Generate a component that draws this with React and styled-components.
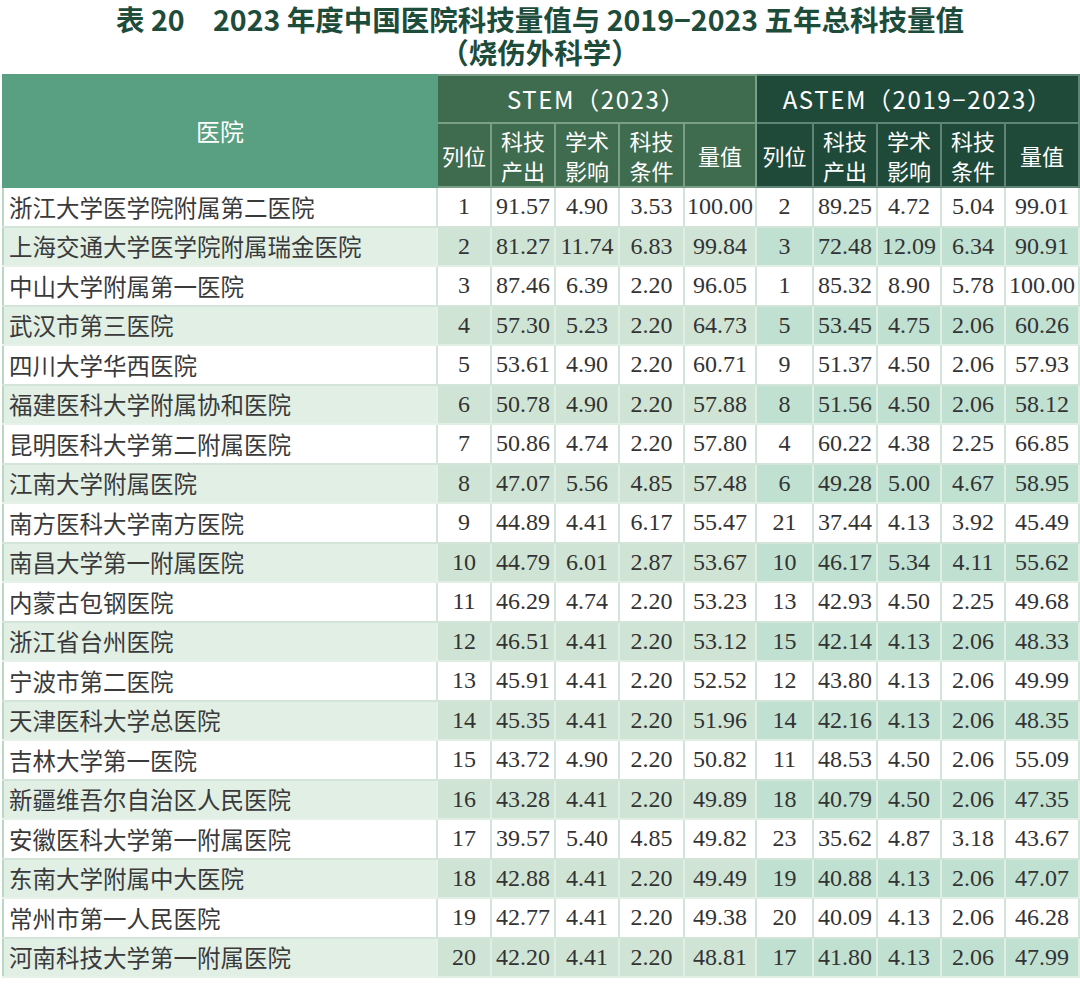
import React from "react";
import styled, { createGlobalStyle } from "styled-components";

const GlobalStyle = createGlobalStyle`
  body {
    margin: 0;
    background: #ffffff;
    font-family: "Noto Sans CJK SC", "Noto Sans", sans-serif;
  }
`;

const Page = styled.div`
  width: 1080px;
  padding: 0 2px;
  box-sizing: border-box;
`;

const Title = styled.header`
  display: flex;
  flex-direction: column;
  align-items: center;
  height: 74px;
  padding-top: 3px;
  box-sizing: border-box;
  font-family: "Noto Sans CJK SC", sans-serif;
  font-weight: 700;
  font-size: 28.5px;
  color: #1e4c3b;
`;

const TitleLine = styled.div`
  line-height: ${(p) => p.$lh};
  white-space: nowrap;
`;

const Table = styled.table`
  width: 1076px;
  table-layout: fixed;
  border-collapse: collapse;
`;

const HeadCell = styled.th`
  padding: 0;
  color: #ffffff;
  font-family: "Noto Sans CJK SC", "Noto Sans", sans-serif;
  font-weight: 400;
  font-size: ${(p) => (p.$big ? "24px" : "22px")};
  letter-spacing: ${(p) => (p.$spaced ? "1.6px" : "0")};
  line-height: 30px;
  text-align: center;
  vertical-align: middle;
  background: ${(p) => p.$bg};
  border: 2px solid ${(p) => p.$line};
  height: ${(p) => p.$h || "auto"};
`;

const Row = styled.tr`
  height: 39.5px;
`;

const NameCell = styled.td`
  padding: 0 0 0 5px;
  font-family: "Noto Sans CJK SC", sans-serif;
  font-size: 23.5px;
  color: #3a3a3a;
  white-space: nowrap;
  background: ${(p) => (p.$alt ? "#e1efe5" : "#ffffff")};
  border: 2px solid ${(p) => (p.$alt ? "#e6f1e9" : "#d3e5d9")};
  border-left-color: #b9d8c4;
`;

const NumCell = styled.td`
  padding: 0;
  text-align: center;
  font-family: "Liberation Serif", "Times New Roman", serif;
  font-size: 24px;
  color: #333333;
  white-space: nowrap;
  background: ${(p) => (p.$alt ? (p.$astem ? "#c0e0d2" : "#cfe4d5") : "#ffffff")};
  border: 2px solid ${(p) => (p.$alt ? "#e0eee4" : "#d3e5d9")};
`;

const rows = [
  ["浙江大学医学院附属第二医院", "1", "91.57", "4.90", "3.53", "100.00", "2", "89.25", "4.72", "5.04", "99.01"],
  ["上海交通大学医学院附属瑞金医院", "2", "81.27", "11.74", "6.83", "99.84", "3", "72.48", "12.09", "6.34", "90.91"],
  ["中山大学附属第一医院", "3", "87.46", "6.39", "2.20", "96.05", "1", "85.32", "8.90", "5.78", "100.00"],
  ["武汉市第三医院", "4", "57.30", "5.23", "2.20", "64.73", "5", "53.45", "4.75", "2.06", "60.26"],
  ["四川大学华西医院", "5", "53.61", "4.90", "2.20", "60.71", "9", "51.37", "4.50", "2.06", "57.93"],
  ["福建医科大学附属协和医院", "6", "50.78", "4.90", "2.20", "57.88", "8", "51.56", "4.50", "2.06", "58.12"],
  ["昆明医科大学第二附属医院", "7", "50.86", "4.74", "2.20", "57.80", "4", "60.22", "4.38", "2.25", "66.85"],
  ["江南大学附属医院", "8", "47.07", "5.56", "4.85", "57.48", "6", "49.28", "5.00", "4.67", "58.95"],
  ["南方医科大学南方医院", "9", "44.89", "4.41", "6.17", "55.47", "21", "37.44", "4.13", "3.92", "45.49"],
  ["南昌大学第一附属医院", "10", "44.79", "6.01", "2.87", "53.67", "10", "46.17", "5.34", "4.11", "55.62"],
  ["内蒙古包钢医院", "11", "46.29", "4.74", "2.20", "53.23", "13", "42.93", "4.50", "2.25", "49.68"],
  ["浙江省台州医院", "12", "46.51", "4.41", "2.20", "53.12", "15", "42.14", "4.13", "2.06", "48.33"],
  ["宁波市第二医院", "13", "45.91", "4.41", "2.20", "52.52", "12", "43.80", "4.13", "2.06", "49.99"],
  ["天津医科大学总医院", "14", "45.35", "4.41", "2.20", "51.96", "14", "42.16", "4.13", "2.06", "48.35"],
  ["吉林大学第一医院", "15", "43.72", "4.90", "2.20", "50.82", "11", "48.53", "4.50", "2.06", "55.09"],
  ["新疆维吾尔自治区人民医院", "16", "43.28", "4.41", "2.20", "49.89", "18", "40.79", "4.50", "2.06", "47.35"],
  ["安徽医科大学第一附属医院", "17", "39.57", "5.40", "4.85", "49.82", "23", "35.62", "4.87", "3.18", "43.67"],
  ["东南大学附属中大医院", "18", "42.88", "4.41", "2.20", "49.49", "19", "40.88", "4.13", "2.06", "47.07"],
  ["常州市第一人民医院", "19", "42.77", "4.41", "2.20", "49.38", "20", "40.09", "4.13", "2.06", "46.28"],
  ["河南科技大学第一附属医院", "20", "42.20", "4.41", "2.20", "48.81", "17", "41.80", "4.13", "2.06", "47.99"],
];

const widths = [434, 54, 64, 64, 65, 72, 57, 64, 64, 64, 74];

const subHeads = [
  ["列位"],
  ["科技", "产出"],
  ["学术", "影响"],
  ["科技", "条件"],
  ["量值"],
];

const STEM_BG = "#3f6b4f";
const STEM_LINE = "#7a9e86";
const ASTEM_BG = "#1f4a3a";
const ASTEM_LINE = "#5e8575";

const SubHeads = ({ bg, line }) =>
  subHeads.map((lines, i) => (
    <HeadCell key={i} $bg={bg} $line={line}>
      {lines.map((l, j) => (
        <div key={j}>{l}</div>
      ))}
    </HeadCell>
  ));

export default function App() {
  return (
    <Page>
      <GlobalStyle />
      <Title>
        <TitleLine $lh="31px">表 20　2023 年度中国医院科技量值与 2019−2023 五年总科技量值</TitleLine>
        <TitleLine $lh="36px">（烧伤外科学）</TitleLine>
      </Title>
      <Table>
        <colgroup>
          {widths.map((w, i) => (
            <col key={i} style={{ width: w }} />
          ))}
        </colgroup>
        <thead>
          <tr>
            <HeadCell rowSpan={2} $bg="#599f82" $line="#599f82" $big>
              医院
            </HeadCell>
            <HeadCell colSpan={5} $bg={STEM_BG} $line={STEM_LINE} $big $spaced $h="46px">
              STEM（2023）
            </HeadCell>
            <HeadCell colSpan={5} $bg={ASTEM_BG} $line={ASTEM_LINE} $big $spaced $h="46px">
              ASTEM（2019−2023）
            </HeadCell>
          </tr>
          <tr style={{ height: 64 }}>
            <SubHeads bg={STEM_BG} line={STEM_LINE} />
            <SubHeads bg={ASTEM_BG} line={ASTEM_LINE} />
          </tr>
        </thead>
        <tbody>
          {rows.map((r, i) => {
            const alt = i % 2 === 1;
            return (
              <Row key={i}>
                <NameCell $alt={alt}>{r[0]}</NameCell>
                {r.slice(1).map((v, j) => (
                  <NumCell key={j} $alt={alt} $astem={j >= 5}>
                    {v}
                  </NumCell>
                ))}
              </Row>
            );
          })}
        </tbody>
      </Table>
    </Page>
  );
}
